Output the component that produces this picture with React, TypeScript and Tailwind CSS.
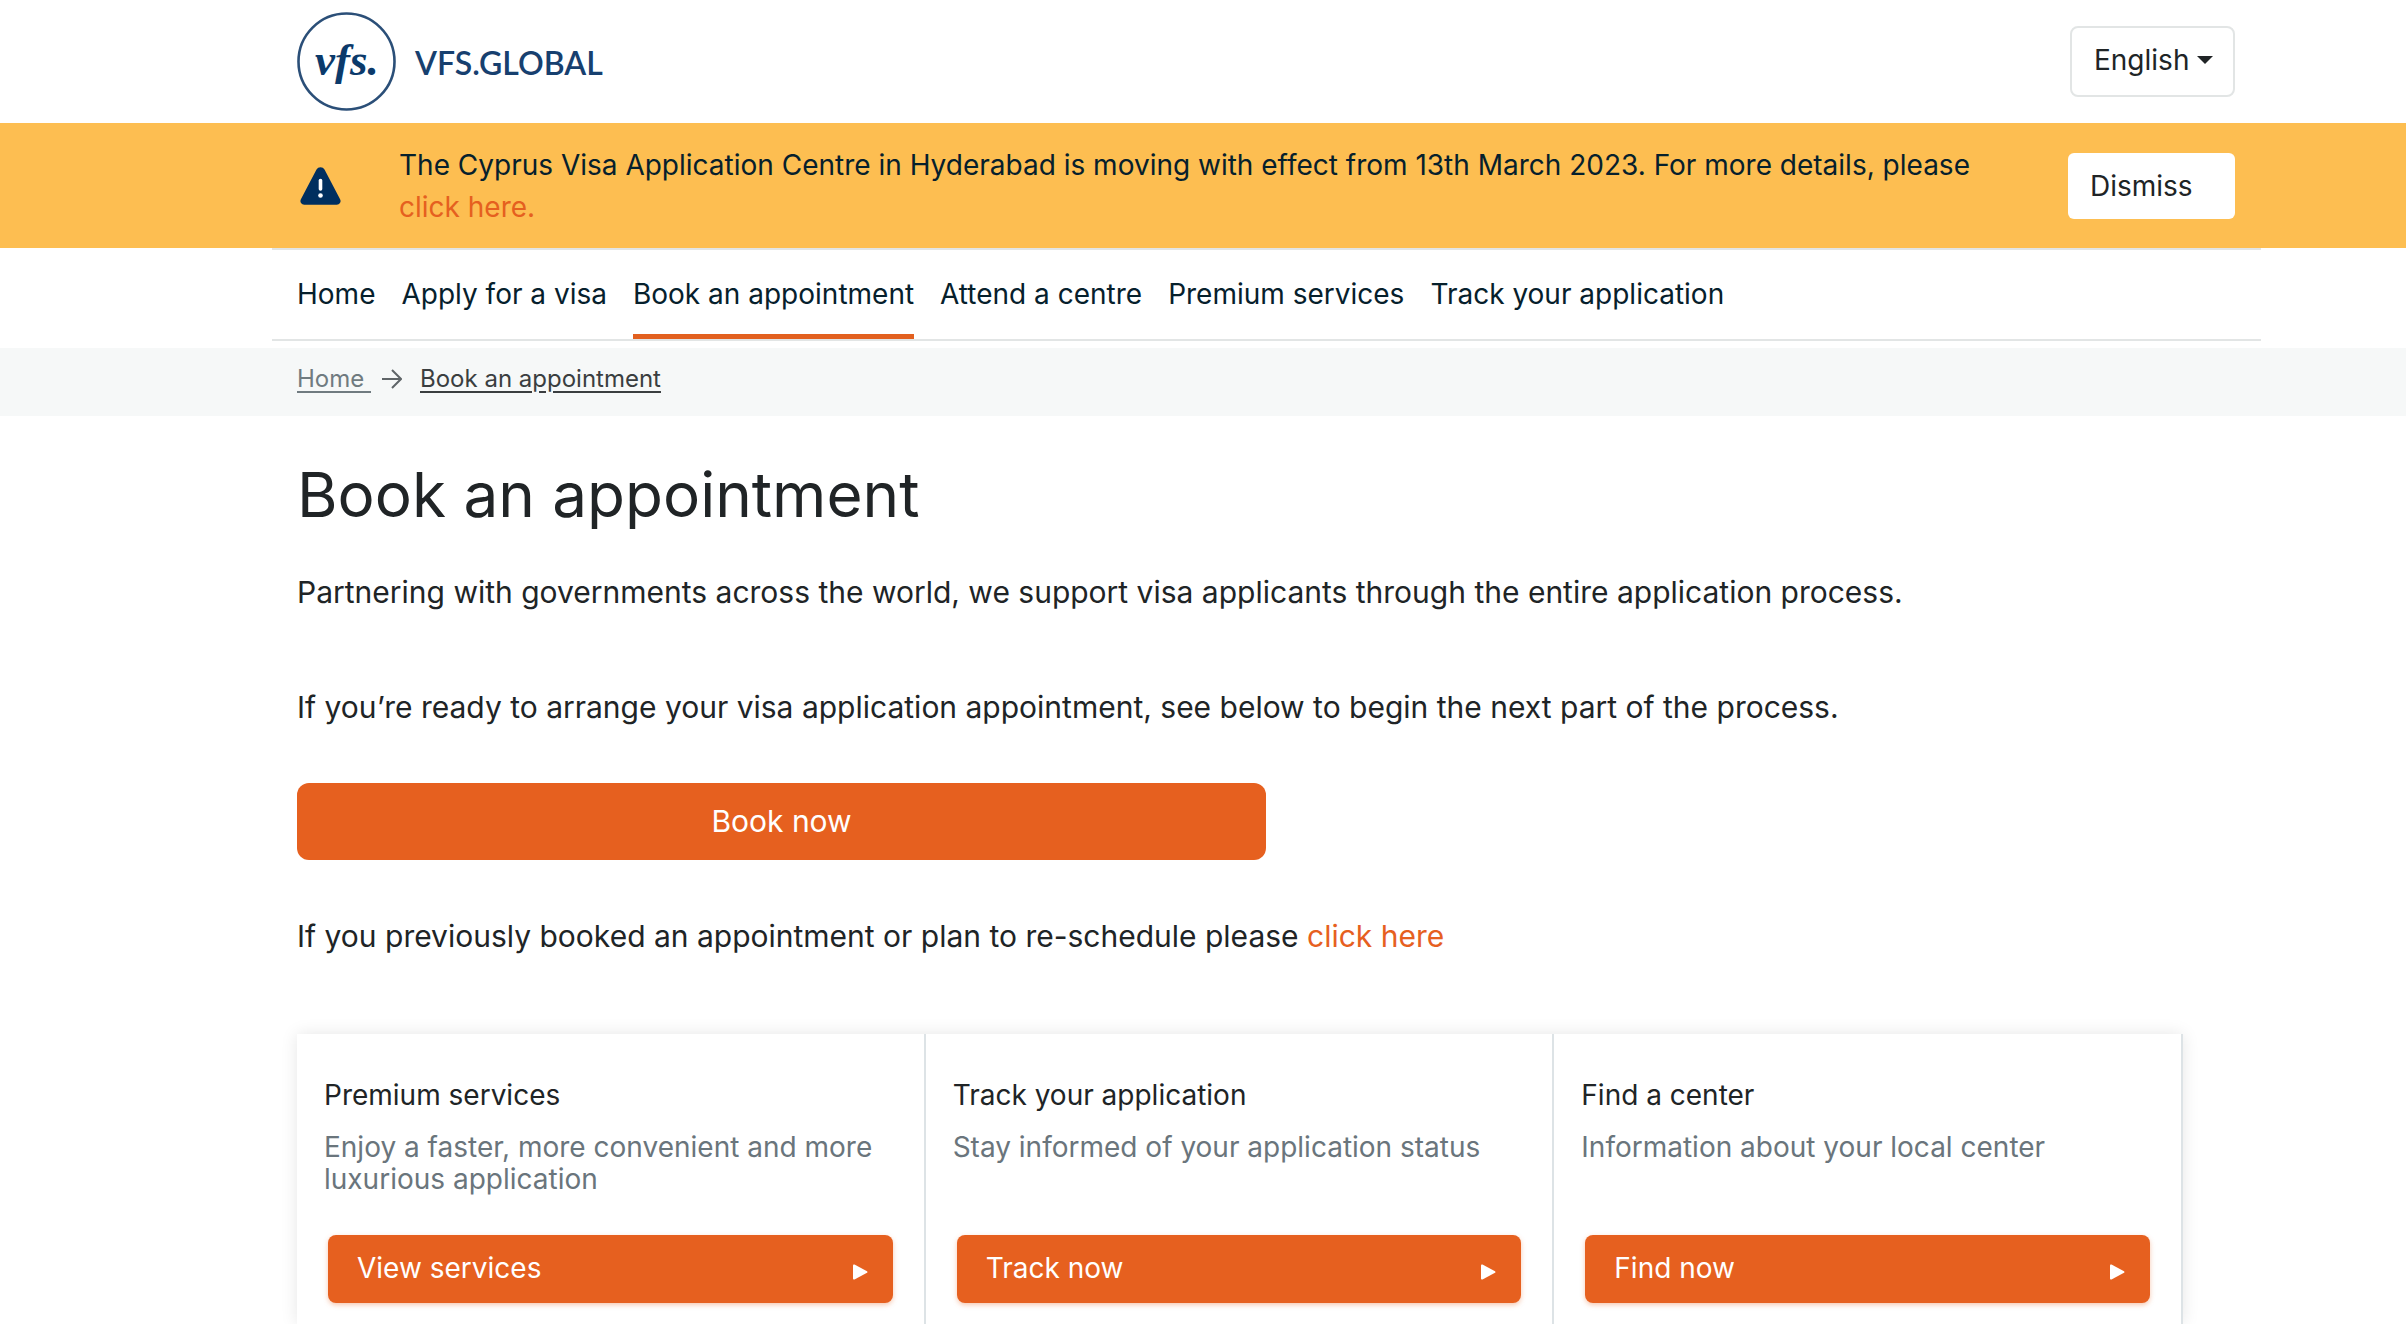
import { useState } from 'react';

const NAV_LINKS = [
  'Home',
  'Apply for a visa',
  'Book an appointment',
  'Attend a centre',
  'Premium services',
  'Track your application',
];

const CARDS = [
  {
    title: 'Premium services',
    text: 'Enjoy a faster, more convenient and more luxurious application',
    action: 'View services',
  },
  {
    title: 'Track your application',
    text: 'Stay informed of your application status',
    action: 'Track now',
  },
  {
    title: 'Find a center',
    text: 'Information about your local center',
    action: 'Find now',
  },
];

function Logo() {
  return (
    <a href="#" aria-label="VFS.GLOBAL" className="block">
      <svg viewBox="0 0 310 100" className="block h-[100px] w-[310px]">
        <circle cx="49.5" cy="49.5" r="48" fill="none" stroke="#2b4f78" strokeWidth="2.6" />
        <text
          x="18"
          y="63"
          fill="#0b3a6b"
          fontSize="45"
          fontStyle="italic"
          fontWeight="700"
          fontFamily="'Liberation Serif', serif"
        >
          vfs.
        </text>
        <text x="118" y="63" fill="#17406f" fontSize="32" fontWeight="600" fontFamily="Lato, sans-serif">
          VFS.GLOBAL
        </text>
      </svg>
    </a>
  );
}

function LanguageSelect() {
  return (
    <div className="relative">
      <select
        aria-label="Language"
        className="block h-[71px] w-[165px] appearance-none rounded-lg border-2 border-[#e2e5e5] bg-white pb-1 pl-[22px] text-[28px] text-[#202426]"
      >
        <option>English</option>
      </select>
      <svg
        viewBox="0 0 16 8"
        className="pointer-events-none absolute top-[30px] right-[22px] h-2 w-4 fill-[#202426]"
        aria-hidden
      >
        <path d="M0 0h16L8 8z" />
      </svg>
    </div>
  );
}

function AlertBanner({ onDismiss }: { onDismiss: () => void }) {
  return (
    <div className="bg-[#fdbe51] pt-[21px] pb-5 pr-[171px] pl-[300px]">
      <div className="flex items-center">
        <svg viewBox="0 0 41 38" className="h-[38px] w-[41px] shrink-0" aria-hidden>
          <path
            d="M16.5 2.6a4.6 4.6 0 0 1 8 0l15.6 29.6a3.8 3.8 0 0 1-3.4 5.6H4.3a3.8 3.8 0 0 1-3.4-5.6z"
            fill="#002f5f"
          />
          <path d="M20.5 13.5v8.5" stroke="#fff" strokeWidth="3.6" strokeLinecap="round" />
          <circle cx="20.5" cy="28.5" r="2.3" fill="#fff" />
        </svg>
        <p className="ml-[58px] flex-1 pr-[90px] text-[28px] leading-[42px] text-[#06202c]">
          The Cyprus Visa Application Centre in Hyderabad is moving with effect from 13th March 2023. For more
          details, please{' '}
          <a href="#" className="text-[#e5601f]">
            click here.
          </a>
        </p>
        <button
          type="button"
          onClick={onDismiss}
          className="h-[66px] w-[167px] rounded-md bg-white pl-[22px] text-left text-[28px] text-[#202426]"
        >
          Dismiss
        </button>
      </div>
    </div>
  );
}

export default function App() {
  const [showAlert, setShowAlert] = useState(true);

  return (
    <div className="flex min-h-screen flex-col overflow-hidden bg-white font-['Inter',sans-serif] text-[#202426]">
      <header>
        <div className="flex h-[123px] items-center justify-between pr-[171px] pl-[297px]">
          <Logo />
          <LanguageSelect />
        </div>
        {showAlert && <AlertBanner onDismiss={() => setShowAlert(false)} />}
        <nav className="mr-[145px] ml-[272px] flex h-[93px] gap-[26px] border-y-2 border-[#e2e5e5] px-[25px]">
          {NAV_LINKS.map((label) => (
            <a
              key={label}
              href="#"
              className={`flex items-center border-b-[5px] pt-[3px] text-[28px] text-[#06202c] ${
                label === 'Book an appointment' ? 'border-[#e2601f]' : 'border-transparent'
              }`}
            >
              {label}
            </a>
          ))}
        </nav>
      </header>

      <nav aria-label="Breadcrumb" className="mt-[7px] flex h-[68px] items-center bg-[#f6f8f8] pb-1.5 pl-[297px] text-2xl">
        <a href="#" className="whitespace-pre text-[#707b80] underline underline-offset-4">
          {'Home '}
        </a>
        <svg
          viewBox="0 0 20 20"
          className="mr-[18px] ml-[11px] size-5 fill-none stroke-[#5f6568] stroke-2"
          aria-hidden
        >
          <path d="M0 10h18M10 1l9 9-9 9" />
        </svg>
        <a href="#" aria-current="page" className="text-[#3a3e40] underline underline-offset-4">
          Book an appointment
        </a>
      </nav>

      <main className="flex flex-1 flex-col pr-[171px] pl-[297px]">
        <h1 className="mt-[41px] text-[62px] leading-[76px]">Book an appointment</h1>
        <p className="mt-9 text-[30px] leading-[46px]">
          Partnering with governments across the world, we support visa applicants through the entire application
          process.
        </p>
        <p className="mt-[69px] text-[30px] leading-[46px]">
          If you’re ready to arrange your visa application appointment, see below to begin the next part of the
          process.
        </p>
        <button type="button" className="mt-[53px] h-[77px] w-1/2 shrink-0 rounded-xl bg-[#e6601f] text-[30px] text-white">
          Book now
        </button>
        <p className="mt-[53px] text-[30px] leading-[46px]">
          If you previously booked an appointment or plan to re-schedule please{' '}
          <a href="#" className="text-[#e6601f]">
            click here
          </a>
        </p>

        <section className="mt-[75px] mr-[52px] grid flex-1 grid-cols-3 shadow-[0_0_16px_rgba(0,0,0,0.1)]">
          {CARDS.map((card) => (
            <article key={card.title} className="flex flex-col border-r-2 border-[#dde3e6] px-[27px] pt-[45px] pb-5">
              <h2 className="text-[28px] leading-8 text-[#202426]">{card.title}</h2>
              <p className="mt-5 min-h-16 text-[28px] leading-8 text-[#6a757c]">{card.text}</p>
              <button
                type="button"
                className="mx-1 mt-10 flex h-[68px] items-center justify-between rounded-lg bg-[#e6601f] pr-[25px] pb-0.5 pl-[29px] text-[28px] text-white shadow-[0_2px_5px_rgba(230,96,31,0.35)]"
              >
                {card.action}
                <svg viewBox="0 0 15 16" className="mt-2 h-4 w-[15px] fill-white" aria-hidden>
                  <path d="M0 1.5Q0 0 1.5.6L14 7.2Q15 8 14 8.8L1.5 15.4Q0 16 0 14.5z" />
                </svg>
              </button>
            </article>
          ))}
        </section>
      </main>
    </div>
  );
}
